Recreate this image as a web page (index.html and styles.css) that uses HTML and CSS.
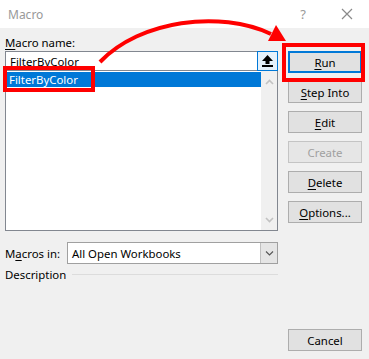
FILE: index.html
```html
<!DOCTYPE html>
<html lang="en">
<head>
    <meta charset="UTF-8">
    <meta name="viewport" content="width=device-width, initial-scale=1.0">
    <title>Macro</title>
    <link rel="stylesheet" href="styles.css">
</head>
<body>
    <div class="dialog">
        <div class="titlebar">
            <span class="title">Macro</span>
            <span class="help">?</span>
            <svg class="close" width="12" height="12" viewBox="0 0 12 12">
                <path d="M1 1 L11 11 M11 1 L1 11" stroke="#8a8a8a" stroke-width="1.2" fill="none"/>
            </svg>
        </div>
        <div class="content">
            <div class="left-section">
                <label class="field-label"><u>M</u>acro name:</label>
                <div class="name-box">
                    <span class="name-text">FilterByColor</span>
                    <button class="up-btn">
                        <svg width="11" height="12" viewBox="0 0 11 12">
                            <path d="M5.5 0 L11 6 L7.5 6 L7.5 9 L3.5 9 L3.5 6 L0 6 Z" fill="#000"/>
                            <rect x="0" y="10" width="11" height="2" fill="#000"/>
                        </svg>
                    </button>
                </div>
                <div class="macro-list">
                    <div class="items">
                        <div class="item selected">FilterByColor</div>
                    </div>
                    <div class="scrollbar">
                        <svg width="9" height="6" viewBox="0 0 9 6"><path d="M1 5 L4.5 1.5 L8 5" stroke="#c2c2c2" stroke-width="1.6" fill="none"/></svg>
                        <svg width="9" height="6" viewBox="0 0 9 6"><path d="M1 1 L4.5 4.5 L8 1" stroke="#c2c2c2" stroke-width="1.6" fill="none"/></svg>
                    </div>
                </div>
                <div class="macros-in">
                    <label>M<u>a</u>cros in:</label>
                    <div class="combo">
                        <span class="combo-text">All Open Workbooks</span>
                        <span class="combo-drop">
                            <svg width="9" height="5" viewBox="0 0 9 5"><path d="M1 0.5 L4.5 4 L8 0.5" stroke="#555" stroke-width="1.1" fill="none"/></svg>
                        </span>
                    </div>
                </div>
                <div class="description">
                    <span>Description</span>
                    <span class="rule"></span>
                </div>
            </div>
            <div class="right-section">
                <button class="btn default"><u>R</u>un</button>
                <button class="btn"><u>S</u>tep Into</button>
                <button class="btn"><u>E</u>dit</button>
                <button class="btn disabled">Create</button>
                <button class="btn"><u>D</u>elete</button>
                <button class="btn"><u>O</u>ptions...</button>
                <button class="btn cancel">Cancel</button>
            </div>
        </div>
        <!-- red annotation marks drawn on top of the dialog -->
        <svg class="annotations" width="369" height="359" viewBox="0 0 369 359">
            <rect x="5" y="68" width="88" height="22" fill="none" stroke="#ff0000" stroke-width="4"/>
            <rect x="284" y="45" width="79" height="35" fill="none" stroke="#ff0000" stroke-width="4"/>
            <path d="M100 62 C140 20, 220 10, 271 34" fill="none" stroke="#ff0000" stroke-width="4"/>
            <polygon points="286,41 268,41 276,25" fill="#ff0000"/>
        </svg>
    </div>
</body>
</html>
```

FILE: styles.css
```css
body {
    margin: 0;
    padding: 0;
    font-family: "Noto Sans", "Open Sans", sans-serif;
    font-size: 11.4px;
    color: #000;
}
.dialog {
    position: relative;
    width: 369px;
    height: 359px;
    background-color: #f0f0f0;
    display: flex;
    flex-direction: column;
    overflow: hidden;
}
.titlebar {
    height: 28px;
    background-color: #fff;
    display: flex;
    align-items: center;
    padding: 0 16px 0 8px;
    flex-shrink: 0;
}
.title {
    flex: 1;
    color: #999;
    font-size: 12px;
}
.help {
    color: #999;
    font-size: 13px;
    margin-right: 35px;
}
.content {
    flex: 1;
    display: flex;
    padding: 7px 7px 8px 5px;
    gap: 10px;
}
.left-section {
    width: 273px;
    display: flex;
    flex-direction: column;
}
.field-label {
    height: 16px;
    line-height: 16px;
}
u {
    text-decoration-thickness: 1px;
    text-underline-offset: 2px;
}
.name-box {
    height: 20px;
    box-sizing: border-box;
    border: 1px solid #828790;
    background-color: #fff;
    display: flex;
    align-items: center;
}
.name-text {
    flex: 1;
    padding-left: 4px;
}
.up-btn {
    width: 21px;
    height: 20px;
    margin: -1px -1px -1px 0;
    border: 1px solid #0078d7;
    background-color: #e5f1fb;
    padding: 0;
    display: flex;
    align-items: center;
    justify-content: center;
    box-sizing: border-box;
}
.macro-list {
    height: 160px;
    box-sizing: border-box;
    border: 1px solid #828790;
    border-top: none;
    background-color: #fff;
    display: flex;
}
.items {
    flex: 1;
    padding-top: 1px;
}
.item {
    height: 15px;
    line-height: 15px;
    padding-left: 3px;
}
.item.selected {
    background-color: #0078d7;
    color: #fff;
}
.scrollbar {
    width: 16px;
    background-color: #f0f0f0;
    display: flex;
    flex-direction: column;
    justify-content: space-between;
    align-items: center;
    padding: 8px 0 7px;
}
.macros-in {
    margin-top: 11px;
    height: 22px;
    display: flex;
    align-items: center;
}
.macros-in label {
    width: 62px;
}
.combo {
    flex: 1;
    height: 22px;
    box-sizing: border-box;
    border: 1px solid #a0a0a0;
    background-color: #fff;
    display: flex;
    align-items: center;
}
.combo-text {
    flex: 1;
    padding-left: 4px;
}
.combo-drop {
    width: 16px;
    height: 20px;
    background-color: #e5e5e5;
    border-left: 1px solid #c0c0c0;
    display: flex;
    align-items: center;
    justify-content: center;
}
.description {
    margin-top: 2px;
    height: 16px;
    display: flex;
    align-items: center;
    gap: 6px;
}
.rule {
    flex: 1;
    height: 1px;
    background-color: #dcdcdc;
}
.right-section {
    width: 74px;
    display: flex;
    flex-direction: column;
    gap: 8px;
    padding-top: 16px;
}
.btn {
    height: 22px;
    box-sizing: border-box;
    background-color: #e1e1e1;
    border: 1px solid #adadad;
    font-family: inherit;
    font-size: 11.4px;
    color: #000;
    padding: 0;
}
.btn.default {
    border: 2px solid #0078d7;
}
.btn.disabled {
    color: #a0a0a0;
    background-color: #e6e6e6;
    border-color: #c4c4c4;
}
.btn.cancel {
    margin-top: auto;
}
.annotations {
    position: absolute;
    left: 0;
    top: 0;
    pointer-events: none;
}
```
